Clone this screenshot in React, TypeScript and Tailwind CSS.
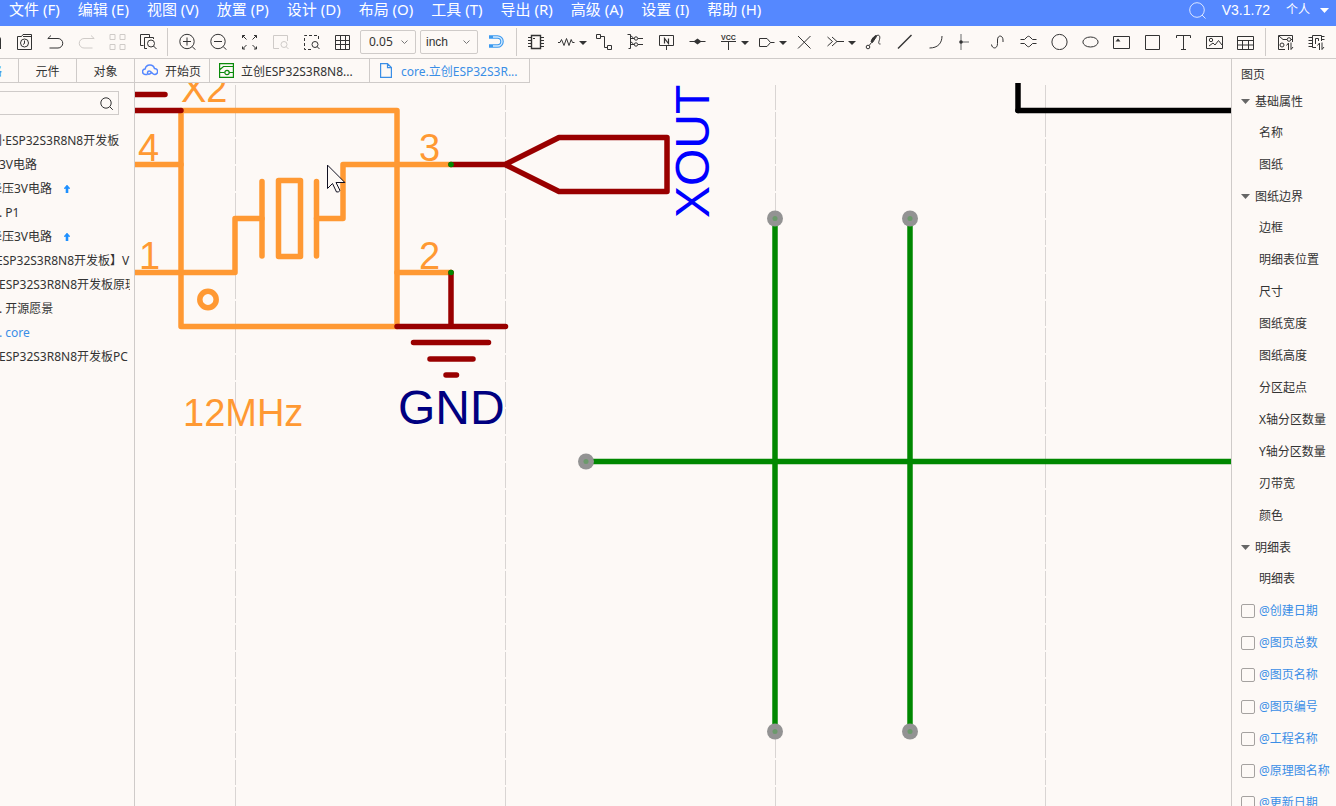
import { ReactNode } from "react";
import clsx from "clsx";

const MENUS = [
  "文件 (F)",
  "编辑 (E)",
  "视图 (V)",
  "放置 (P)",
  "设计 (D)",
  "布局 (O)",
  "工具 (T)",
  "导出 (R)",
  "高级 (A)",
  "设置 (I)",
  "帮助 (H)",
];

type Tool = {
  label: string;
  icon: ReactNode;
  disabled?: boolean;
  menu?: boolean;
};

const FILE_TOOLS: Tool[] = [
  {
    label: "最近",
    icon: (
      <>
        <path d="M1.5 16.5v-13h4l1.500-2h8.500v15zM7 3.500h8.500" />
        <circle cx="8.500" cy="10" r="4" />
        <path d="M8.500 7.500v3l-1.500 1" />
      </>
    ),
  },
  {
    label: "撤销",
    icon: <path d="M4 2.5L.8 5.5H11a4.700 4.700 0 0 1 0 9.500H2.500" />,
  },
  {
    label: "重做",
    disabled: true,
    icon: <path d="M13 2.500l3.200 3H6A4.700 4.700 0 0 0 6 15h8.500" />,
  },
  {
    label: "阵列",
    disabled: true,
    icon: (
      <path d="M1 1.500h5v5H1zM11 1.500h5v5h-5zM1 11.500h5v5H1zM11 11.500h5v5h-5z" />
    ),
  },
  {
    label: "查找",
    icon: (
      <>
        <path d="M3.500 12.500h-3v-11h9v3M7 15.500H4.500v-11h9V6" />
        <circle cx="11" cy="10.500" r="3.500" />
        <path d="M13.500 13l3 3" />
      </>
    ),
  },
];

const VIEW_TOOLS: Tool[] = [
  {
    label: "放大",
    icon: (
      <>
        <circle cx="8" cy="8.500" r="7.200" />
        <path d="M4 8.500h8M8 4.500v8M13.200 13.700l3.300 3" />
      </>
    ),
  },
  {
    label: "缩小",
    icon: (
      <>
        <circle cx="8" cy="8.500" r="7.200" />
        <path d="M4 8.500h8M13.200 13.700l3.300 3" />
      </>
    ),
  },
  {
    label: "适合全部",
    icon: (
      <path d="M1.500 5V2.500H4M1.500 2.500l4 4M13 2.500h2.500V5M15.500 2.500l-4 4M1.500 13.500V16H4M1.500 16l4-4M13 16h2.500v-2.500M15.500 16l-4-4" />
    ),
  },
  {
    label: "适合选中",
    disabled: true,
    icon: (
      <>
        <path d="M7 15.500H1.500v-13h14V8" />
        <circle cx="12" cy="11.500" r="3" />
        <path d="M14 13.500l2.500 2.500" />
      </>
    ),
  },
  {
    label: "适合区域",
    icon: (
      <>
        <path d="M8 16.500H1.500v-14h14V8" strokeDasharray="3 2" />
        <circle cx="12" cy="11.500" r="3" />
        <path d="M14 13.500l2.500 2.500" />
      </>
    ),
  },
  {
    label: "网格",
    icon: (
      <path d="M1.500 2.500h14v14h-14zM6.500 2.500v14M11.500 2.500v14M1.500 7.500h14M1.500 11.500h14" />
    ),
  },
];

const PLACE_TOOLS: Tool[] = [
  {
    label: "器件",
    icon: (
      <>
        <path d="M4.500 2.500h9v13h-9z" strokeWidth="1.400" />
        <path d="M1 4.500h3M1 7.500h3M1 10.500h3M1 13.500h3M14 4.500h3M14 7.500h3M14 10.500h3M14 13.500h3M6 5.500h2" />
      </>
    ),
  },
  {
    label: "常用库",
    menu: true,
    icon: <path d="M0 9.500h2l1.500-3 2.500 6 2.500-7 2.500 7 2.200-6 1.300 3h2" />,
  },
  {
    label: "导线",
    icon: <path d="M.5 1.500h4v4h-4zM11.500 12.500h4v4h-4zM5 3.500h3.500v11h3" />,
  },
  {
    label: "总线",
    icon: (
      <>
        <path d="M.5 1.500h3v14h-2M3.500 5.500h4M3.500 11.500h4M11 5.500h5M11 11.500h5M3.500 2.500l3 2.500M3.500 8.500l3 2.500" />
        <circle cx="9" cy="5.500" r="1.700" />
        <circle cx="9" cy="11.500" r="1.700" />
      </>
    ),
  },
  {
    label: "网络标签",
    icon: (
      <>
        <path d="M1.500 2.500h14v10h-14zM8.500 13v4" />
        <path d="M6.500 10.500v-5l4 5v-5" strokeWidth="1.200" />
      </>
    ),
  },
  {
    label: "网络端口",
    icon: (
      <>
        <path d="M.5 8.500h16" />
        <path
          d="M4.500 8.500l4-3 4 3-4 3z"
          fill="currentColor"
          stroke="none"
        />
      </>
    ),
  },
  {
    label: "电源",
    menu: true,
    icon: (
      <>
        <text
          x="8.500"
          y="6.500"
          fontSize="7"
          textAnchor="middle"
          fill="currentColor"
          stroke="none"
          fontFamily="Liberation Sans, sans-serif"
          fontWeight="700"
        >
          VCC
        </text>
        <path d="M1 8.500h15M8.500 8.500v8.500" />
      </>
    ),
  },
  {
    label: "端口",
    menu: true,
    icon: <path d="M1.500 5.500H9l3.500 4-3.500 4H1.500zM12.500 9.500h4" />,
  },
  { label: "非连接", icon: <path d="M2 3l12.500 12.500M14.500 3L2 15.500" /> },
  {
    label: "线束",
    menu: true,
    icon: <path d="M.5 4l5 4.500-5 4.500M5 4l5 4.500L5 13M10 8.500h7" />,
  },
  {
    label: "探针",
    icon: (
      <>
        <circle cx="3" cy="14" r="1.800" />
        <path d="M4.200 12.500l2.300-3" />
        <path
          d="M6 9c.5-3 2.500-5.500 5-6.500l.5 1L7.500 9.500z"
          fill="currentColor"
        />
        <path d="M11 3c3-2 4.500 0 3.500 3.500s-1.500 4.500 1 4.500" />
      </>
    ),
  },
  { label: "直线", icon: <path d="M2 15.500L15.500 2" strokeWidth="1.400" /> },
  { label: "圆弧", icon: <path d="M15 3c0 7-4 12-12.500 12" /> },
  {
    label: "引脚",
    icon: (
      <>
        <path d="M3 1v16M3 9h8" strokeWidth="1.500" stroke="#999" />
        <circle
          cx="3"
          cy="9"
          r="1.800"
          fill="currentColor"
          stroke="none"
        />
      </>
    ),
  },
  {
    label: "贝塞尔",
    icon: <path d="M2.500 11.500c.5 4.500 6 5 6-1V7c0-5.500 5.500-5 5.500 0v2" />,
  },
  {
    label: "曲线",
    icon: (
      <path d="M.5 6.500h4l2.500-2.500c1-1 2-1 3 0l2.500 2.500h4M.5 10.500h4l2.500 2.500c1 1 2 1 3 0l2.500-2.500h4" />
    ),
  },
  { label: "圆", icon: <circle cx="8.500" cy="9" r="7.600" /> },
  { label: "椭圆", icon: <ellipse cx="8.500" cy="9" rx="7.600" ry="5" /> },
  {
    label: "图纸",
    icon: (
      <>
        <path d="M.5 3.500h16v12H.5z" />
        <path d="M2.500 8.500l2.500-3 2.500 3z" fill="currentColor" stroke="none" />
      </>
    ),
  },
  { label: "矩形", icon: <path d="M1.500 2.500h14v14h-14z" /> },
  {
    label: "文本",
    icon: <path d="M1.500 5V2.500h14V5M8.500 2.500v14M6 16.500h5" />,
  },
  {
    label: "图片",
    icon: (
      <>
        <path d="M.5 3.500h16v12H.5zM3 13l4-3 2 2 3.500-4.500L16 12" />
        <circle cx="5" cy="7" r="1.700" />
      </>
    ),
  },
  {
    label: "表格",
    icon: (
      <path d="M.5 3.500h16v13H.5zM.5 7.500h16M.5 12h16M5.500 7.500v9M11.500 7.500v9" />
    ),
  },
];

const SYNC_TOOLS: Tool[] = [
  {
    label: "更新到PCB",
    icon: (
      <>
        <path d="M8 16.500H1.500v-14h14V9M2 3l4 3.500h4M14 6.500h2M11.500 17v-7l-2 2.500M14 9.500v7l2-2.500" />
        <circle cx="12" cy="6.500" r="1.800" />
        <circle cx="5" cy="12" r="2" />
      </>
    ),
  },
  {
    label: "更新器件",
    icon: (
      <path d="M8 14.500H4.500v-12h9V8M.5 4.500h4M.5 7.500h4M.5 10.500h4M.5 13.500h4M13.500 3.500h3M13.500 6.500h3M7.500 11V5.500h3V8M11.500 17v-7l-2 2.500M14 9.500v7l2-2.500" />
    ),
  },
];

const PROJECT_TREE = [
  { text: "创·ESP32S3R8N8开发板", indent: "pl-0" },
  { text: "3V电路", indent: "pl-[9px]" },
  { text: "降压3V电路", indent: "pl-0", changed: true },
  { text: ". P1", indent: "pl-[9px]" },
  { text: "降压3V电路", indent: "pl-0", changed: true },
  { text: "ESP32S3R8N8开发板】V", indent: "pl-[6px]" },
  { text: "ESP32S3R8N8开发板原理", indent: "pl-[9px]" },
  { text: ". 开源愿景", indent: "pl-[9px]" },
  { text: ". core", indent: "pl-[9px]", active: true },
  { text: "ESP32S3R8N8开发板PC", indent: "pl-[9px]" },
];

const PROPERTY_GROUPS = [
  { title: "基础属性", items: ["名称", "图纸"] },
  {
    title: "图纸边界",
    items: [
      "边框",
      "明细表位置",
      "尺寸",
      "图纸宽度",
      "图纸高度",
      "分区起点",
      "X轴分区数量",
      "Y轴分区数量",
      "刃带宽",
      "颜色",
    ],
  },
  { title: "明细表", items: ["明细表"] },
];

const TABLE_FIELDS = [
  "@创建日期",
  "@图页总数",
  "@图页名称",
  "@图页编号",
  "@工程名称",
  "@原理图名称",
  "@更新日期",
];

function Caret({ className }: { className?: string }) {
  return (
    <svg
      width="9"
      height="5"
      viewBox="0 0 9 5"
      fill="currentColor"
      className={clsx("shrink-0", className)}
    >
      <path d="M0 0h9L4.500 5z" />
    </svg>
  );
}

function ToolButton({ label, icon, disabled, menu }: Tool) {
  return (
    <button
      type="button"
      aria-label={label}
      disabled={disabled}
      className={clsx(
        "flex h-[31px] shrink-0 items-center pl-[7px] hover:bg-black/5",
        menu ? "w-[38px]" : "w-[31px]",
        disabled ? "text-[#cfcbc8]" : "text-[#333]",
      )}
    >
      <svg
        width="17"
        height="17"
        viewBox="0 0 17 17"
        fill="none"
        stroke="currentColor"
        className="shrink-0"
      >
        {icon}
      </svg>
      {menu && (
        <svg
          width="8"
          height="4"
          viewBox="0 0 8 4"
          className="ml-1 mt-[3px] shrink-0"
        >
          <path d="M0 0h8L4 4z" fill="#333" />
        </svg>
      )}
    </button>
  );
}

function Divider({ className }: { className: string }) {
  return (
    <div
      className={clsx("mt-[2px] h-7 w-px shrink-0 bg-[#cfcbc9]", className)}
    />
  );
}

function ToolSelect({
  label,
  value,
  className,
}: {
  label: string;
  value: string;
  className: string;
}) {
  return (
    <div className={clsx("relative mt-1 h-6 shrink-0", className)}>
      <select
        aria-label={label}
        defaultValue={value}
        className="h-full w-full appearance-none rounded-xs border border-[#cfcbc9] bg-transparent text-xs text-[#333] outline-none"
      >
        <option>{value}</option>
      </select>
      <svg
        width="7"
        height="5"
        viewBox="0 0 7 5"
        fill="none"
        stroke="#777"
        className="pointer-events-none absolute right-2 top-[10px]"
      >
        <path d="M.5 .5l3 3 3-3" />
      </svg>
    </div>
  );
}

function MenuBar() {
  return (
    <header className="flex h-[26px] shrink-0 items-start justify-between bg-[#5588ff] pl-[9px] pr-[7px] text-white">
      <nav className="flex gap-[18px] whitespace-nowrap text-[15px] leading-[19px]">
        {MENUS.map((menu) => (
          <button key={menu} type="button">
            {menu}
          </button>
        ))}
      </nav>
      <div className="flex h-5 items-center text-sm">
        <button type="button" aria-label="搜索" className="mr-4">
          <svg
            width="17"
            height="17"
            viewBox="0 0 17 17"
            fill="none"
            stroke="#dbe6ff"
          >
            <circle cx="8" cy="8" r="7.300" />
            <path d="M13 13l3.500 3.500" />
          </svg>
        </button>
        <span className="mr-4 font-['Liberation_Sans',sans-serif]">
          V3.1.72
        </span>
        <button type="button" className="flex items-center gap-[10px] text-xs">
          个人
          <Caret />
        </button>
      </div>
    </header>
  );
}

function Toolbar() {
  return (
    <div className="flex h-[33px] shrink-0 items-start overflow-hidden border-b border-[#cfcbc9]">
      <div className="flex h-[31px] w-[9px] shrink-0 items-center">
        <svg width="2" height="13" viewBox="0 0 2 13" className="mt-[3px]">
          <path d="M0 0l1 1.500V12H0z" fill="#333" />
        </svg>
      </div>
      {FILE_TOOLS.map((tool) => (
        <ToolButton key={tool.label} {...tool} />
      ))}
      <Divider className="ml-[3px] mr-1" />
      {VIEW_TOOLS.map((tool) => (
        <ToolButton key={tool.label} {...tool} />
      ))}
      <ToolSelect
        label="网格尺寸"
        value="0.05"
        className="ml-[2px] w-14 [&>select]:pl-2"
      />
      <ToolSelect
        label="单位"
        value="inch"
        className="ml-1 w-[58px] font-['Liberation_Sans',sans-serif] [&>select]:pl-[5px]"
      />
      <button
        type="button"
        aria-label="吸附"
        className="ml-[3px] flex h-[31px] w-[31px] shrink-0 items-center justify-center"
      >
        <svg width="15" height="13" viewBox="0 0 15 13" fill="none">
          <path
            d="M0 2h8.500a4.500 4.500 0 0 1 0 9H0"
            stroke="#3b99ef"
            strokeWidth="3.600"
          />
          <path
            d="M4 2h4.500a4.500 4.500 0 0 1 0 9H4"
            stroke="#d9ecfd"
            strokeWidth="1.400"
          />
        </svg>
      </button>
      <Divider className="ml-1 mr-[3px]" />
      {PLACE_TOOLS.map((tool) => (
        <ToolButton key={tool.label} {...tool} />
      ))}
      <Divider className="mx-1" />
      {SYNC_TOOLS.map((tool) => (
        <ToolButton key={tool.label} {...tool} />
      ))}
    </div>
  );
}

function ProjectPanel() {
  return (
    <aside className="flex w-[135px] shrink-0 flex-col overflow-hidden border-r border-[#cfcbc9]">
      <div className="flex h-6 shrink-0 border-b border-[#cfcbc9]">
        <button
          type="button"
          className="flex w-[19px] items-center justify-end overflow-hidden border-r border-[#cfcbc9] pr-4 pt-[2px] text-[#3a8ee6]"
        >
          格
        </button>
        <button
          type="button"
          className="flex-1 border-r border-[#cfcbc9] pt-[2px]"
        >
          元件
        </button>
        <button type="button" className="flex-1 pt-[2px]">
          对象
        </button>
      </div>
      <label className="mr-[15px] mt-2 flex h-6 shrink-0 items-center border border-l-0 border-[#cfcbc9]">
        <input
          aria-label="搜索"
          className="w-full min-w-0 bg-transparent px-1 outline-none"
        />
        <svg
          width="13"
          height="13"
          viewBox="0 0 13 13"
          fill="none"
          stroke="#333"
          className="mr-[5px] shrink-0"
        >
          <circle cx="6" cy="6" r="5.200" />
          <path d="M9.800 9.800l3 3" />
        </svg>
      </label>
      <ul className="-ml-[10px] mr-1 mt-[14px] overflow-hidden">
        {PROJECT_TREE.map(({ text, indent, changed, active }, index) => (
          <li
            key={index}
            className={clsx(
              "flex h-6 items-center whitespace-nowrap",
              indent,
              active && "text-[#3a8ee6]",
            )}
          >
            {text}
            {changed && (
              <svg
                width="6"
                height="8"
                viewBox="0 0 6 8"
                className="ml-3 shrink-0"
              >
                <path d="M3 0l3 3.500H4V8H2V3.500H0z" fill="#1e90ff" stroke="#1e90ff" strokeWidth=".6" />
              </svg>
            )}
          </li>
        ))}
      </ul>
    </aside>
  );
}

function DocumentTabs() {
  return (
    <div className="flex h-6 shrink-0">
      <button
        type="button"
        className="flex w-[75px] items-center gap-[7px] border-b border-r border-[#cfcbc9] pl-[7px]"
      >
        <svg
          width="16"
          height="13"
          viewBox="0 0 16 13"
          fill="none"
          stroke="#5588ff"
          strokeWidth="1.500"
        >
          <path d="M5.500 10.500H3.500a2.800 2.800 0 0 1-.3-5.600 4.800 4.800 0 0 1 9.300-.4 3 3 0 0 1 .3 6c-2.500 0-3.300-3.500-5.600-3.500-2 0-2.400 3.200-.2 3.200 1.200 0 2-1.200 3-2.200" />
        </svg>
        <span className="pt-[2px]">开始页</span>
      </button>
      <button
        type="button"
        className="flex w-40 items-center gap-[7px] border-b border-r border-[#cfcbc9] pl-[9px]"
      >
        <svg
          width="15"
          height="15"
          viewBox="0 0 15 15"
          fill="none"
          stroke="#0a8a0a"
          strokeWidth="1.200"
        >
          <path d="M.6.6h13.800v13.800H.6zM1 6.500l3.500-3h10M1 9.500h4.500M10 9.500h4.500" />
          <circle cx="8" cy="9.500" r="2.200" />
        </svg>
        <span className="pt-[2px]">立创ESP32S3R8N8...</span>
      </button>
      <button
        type="button"
        className="flex w-40 items-center gap-[9px] border-b border-r border-[#cfcbc9] pl-[10px] text-[#3a8ee6]"
      >
        <svg
          width="12"
          height="15"
          viewBox="0 0 12 15"
          fill="none"
          stroke="#3a8ee6"
          strokeWidth="1.200"
        >
          <path d="M.6.6h6.900l3.900 4v9.800H.6zM7.500.6v4h3.900" />
        </svg>
        <span className="pt-[2px]">core.立创ESP32S3R...</span>
      </button>
    </div>
  );
}

const GRID_COLUMNS = [100.5, 370.5, 640.5, 910.5];

const WIRE_HANDLES = [
  [640, 135.5],
  [775, 135.5],
  [451, 378.5],
  [640, 648.5],
  [775, 648.5],
];

function Schematic() {
  return (
    <div className="relative min-h-0 flex-1 overflow-hidden">
      <svg
        className="block h-full w-full font-['Liberation_Sans',sans-serif]"
        fill="none"
        strokeWidth="5.500"
        strokeLinecap="round"
        strokeLinejoin="round"
      >
        <g
          stroke="#d9d5d3"
          strokeWidth="1"
          strokeLinecap="butt"
          strokeDasharray="25 2"
        >
          {GRID_COLUMNS.map((x) => (
            <line key={x} x1={x} x2={x} y1="2" y2="100%" />
          ))}
        </g>

        {/* crystal X2 */}
        <g stroke="#ff9933">
          <path d="M46 27.500H262V243.500H46z" />
          <path d="M-5 81.500H46M-5 189.500H100V135.500H127M181.500 135.500H208V81.500H316M262 189.500H316" />
          <path d="M127 98.500V173M181.500 98.500V173" />
          <path d="M143.500 97.500H165.500V173.500H143.500z" />
          <circle cx="73" cy="216.500" r="8.200" />
        </g>
        <g fill="#ff9933" fontSize="38">
          <text x="46" y="19">
            X2
          </text>
          <text x="3" y="78">
            4
          </text>
          <text x="4" y="186">
            1
          </text>
          <text x="284" y="78">
            3
          </text>
          <text x="284" y="186">
            2
          </text>
          <text x="48" y="343">
            12MHz
          </text>
        </g>

        {/* ground and XOUT port */}
        <g stroke="#990000">
          <path d="M-5 11.500H30M-5 27.500H46" />
          <path d="M316 189.500V243.500M262 243.500H370.500M278.500 259.500H353.500M295 276H338M311 292H321.500" />
          <path d="M316 81.500H370L424 54.500H532V108.500H424L370 81.500" />
        </g>
        <g fill="#008800">
          <circle cx="316" cy="81.500" r="2.800" />
          <circle cx="316" cy="189.500" r="2.800" />
        </g>
        <text x="263" y="341" fontSize="48" fill="#000080">
          GND
        </text>
        <text
          transform="translate(574 135) rotate(-90)"
          fontSize="48"
          fill="#0000ff"
        >
          XOUT
        </text>

        {/* sheet frame */}
        <g stroke="#000">
          <line x1="883" x2="883" y1="-5" y2="27.500" />
          <line x1="883" x2="100%" y1="27.500" y2="27.500" />
        </g>

        <g stroke="#008800">
          <line x1="640" x2="640" y1="135.500" y2="648.500" />
          <line x1="775" x2="775" y1="135.500" y2="648.500" />
          <line x1="451" x2="100%" y1="378.500" y2="378.500" />
        </g>
        {WIRE_HANDLES.map(([cx, cy]) => (
          <g key={`${cx}-${cy}`}>
            <circle cx={cx} cy={cy} r="8" fill="#939393" />
            <circle cx={cx} cy={cy} r="2.500" fill="#6b9a6b" />
          </g>
        ))}
        <path
          d="M192.500 82.500v23l5-5 4 8.500q2 .5 3.500-1.500l-4-8h8.500z"
          fill="#fdf9f6"
          stroke="#111122"
          strokeWidth="1"
        />
      </svg>
    </div>
  );
}

function PropertyPanel() {
  return (
    <aside className="w-[105px] shrink-0 overflow-hidden whitespace-nowrap border-l border-[#cfcbc9]">
      <h2 className="flex h-[27px] items-center pl-[9px] pt-1">图页</h2>
      {PROPERTY_GROUPS.map(({ title, items }) => (
        <section key={title}>
          <button
            type="button"
            className="flex h-[31px] items-center gap-[5px] pl-[9px]"
          >
            <Caret className="text-[#666]" />
            {title}
          </button>
          <ul className="pl-[27px]">
            {items.map((item) => (
              <li key={item} className="flex h-8 items-center">
                {item}
              </li>
            ))}
          </ul>
        </section>
      ))}
      {TABLE_FIELDS.map((field) => (
        <label
          key={field}
          className="flex h-8 items-center gap-1 pl-[9px] text-[#3a8ee6]"
        >
          <input
            type="checkbox"
            className="size-[14px] shrink-0 appearance-none rounded-xs border border-[#a5a2a0] checked:bg-[#3a8ee6]"
          />
          {field}
        </label>
      ))}
    </aside>
  );
}

export default function App() {
  return (
    <div className="flex h-screen flex-col overflow-hidden bg-[#fdf9f6] font-['Noto_Sans','Noto_Sans_CJK_SC',sans-serif] text-xs text-[#333]">
      <MenuBar />
      <Toolbar />
      <div className="flex min-h-0 flex-1">
        <ProjectPanel />
        <main className="flex min-w-0 flex-1 flex-col">
          <DocumentTabs />
          <Schematic />
        </main>
        <PropertyPanel />
      </div>
    </div>
  );
}
